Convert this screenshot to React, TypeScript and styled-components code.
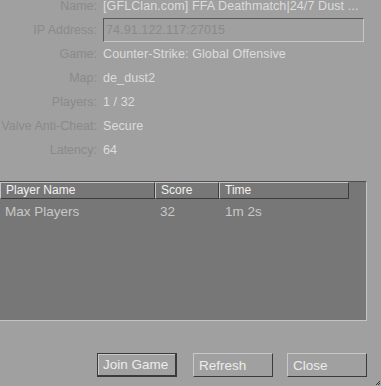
import React from "react";
import styled, { createGlobalStyle } from "styled-components";

const Global = createGlobalStyle`
  html, body { margin: 0; padding: 0; background: #a0a0a0; }
  body { font-family: "Liberation Sans", Arial, sans-serif; font-size: 12.5px; }
`;

const Frame = styled.div`
  width: 381px;
  height: 386px;
  overflow: hidden;
  position: relative;
  background: #a0a0a0;
  display: flex;
  flex-direction: column;
`;

const Info = styled.div`
  display: grid;
  grid-template-columns: 110px 262px;
  column-gap: 6px;
  margin-left: -13px;
  margin-top: -6px;
`;

const Label = styled.div`
  height: 24px;
  line-height: 24px;
  text-align: right;
  color: #8a8a8a;
  white-space: nowrap;
`;

const Value = styled.div`
  height: 24px;
  line-height: 24px;
  color: #dcdcdc;
  white-space: nowrap;
  overflow: hidden;
  letter-spacing: 0.1px;
`;

const Field = styled.div`
  box-sizing: border-box;
  height: 24px;
  width: 261px;
  border-top: 1px solid #585858;
  border-left: 1px solid #585858;
  border-bottom: 1px solid #c8c8c8;
  border-right: 1px solid #c8c8c8;
  line-height: 22px;
  padding-left: 2px;
  color: #8a8a8a;
`;

const List = styled.div`
  box-sizing: border-box;
  margin-top: 19px;
  margin-left: -2px;
  width: 369px;
  height: 140px;
  background: #777777;
  border-top: 1px solid #4e4e4e;
  border-right: 1px solid #c4c4c4;
  border-bottom: 1px solid #c4c4c4;
  display: flex;
  flex-direction: column;
`;

const HeaderRow = styled.div`
  display: flex;
  padding-left: 2px;
`;

const HeaderCell = styled.div<{ $w: number }>`
  box-sizing: border-box;
  width: ${(p) => p.$w}px;
  height: 17px;
  line-height: 15px;
  padding-left: 5px;
  font-size: 12px;
  border-top: 1px solid #c4c4c4;
  border-left: 1px solid #c4c4c4;
  border-bottom: 1px solid #3c3c3c;
  border-right: 1px solid #3c3c3c;
  color: #f2f2f2;
`;

const Row = styled.div`
  display: flex;
  padding-left: 2px;
  height: 26px;
  line-height: 26px;
  color: #c8c8c8;
  font-size: 13.5px;
`;

const Cell = styled.div<{ $w: number }>`
  width: ${(p) => p.$w}px;
  padding-left: 5px;
  box-sizing: border-box;
`;

const Buttons = styled.div`
  display: flex;
  margin-top: 32px;
  padding-left: 97px;
`;

const Button = styled.button<{ $default?: boolean; $gap: number }>`
  box-sizing: border-box;
  width: 80px;
  height: 24px;
  margin: 0 0 0 ${(p) => p.$gap}px;
  padding: 0 0 0 5px;
  text-align: left;
  font-family: inherit;
  font-size: 13.5px;
  color: #ececec;
  background: #a0a0a0;
  border-top: 1px solid ${(p) => (p.$default ? "#3a3a3a" : "#c8c8c8")};
  border-left: 1px solid ${(p) => (p.$default ? "#3a3a3a" : "#c8c8c8")};
  border-bottom: ${(p) => (p.$default ? "2px" : "1px")} solid #3a3a3a;
  border-right: ${(p) => (p.$default ? "2px" : "1px")} solid #3a3a3a;
  box-shadow: ${(p) => (p.$default ? "inset 1px 1px 0 #c8c8c8" : "none")};
`;

const Grip = styled.svg`
  position: absolute;
  right: 0;
  bottom: 0;
`;

export default function App() {
  const rows: [string, React.ReactNode][] = [
    ["Name:", <Value key="n">[GFLClan.com] FFA Deathmatch|24/7 Dust ...</Value>],
    ["IP Address:", <Value key="i"><Field>74.91.122.117:27015</Field></Value>],
    ["Game:", <Value key="g">Counter-Strike: Global Offensive</Value>],
    ["Map:", <Value key="m">de_dust2</Value>],
    ["Players:", <Value key="p">1 / 32</Value>],
    ["Valve Anti-Cheat:", <Value key="v">Secure</Value>],
    ["Latency:", <Value key="l">64</Value>],
  ];
  return (
    <>
      <Global />
      <Frame>
        <Info>
          {rows.map(([l, v]) => (
            <React.Fragment key={l}>
              <Label>{l}</Label>
              {v}
            </React.Fragment>
          ))}
        </Info>
        <List>
          <HeaderRow>
            <HeaderCell $w={155}>Player Name</HeaderCell>
            <HeaderCell $w={64}>Score</HeaderCell>
            <HeaderCell $w={130}>Time</HeaderCell>
          </HeaderRow>
          <Row>
            <Cell $w={155}>Max Players</Cell>
            <Cell $w={65}>32</Cell>
            <Cell $w={130}>1m 2s</Cell>
          </Row>
        </List>
        <Buttons>
          <Button $default $gap={0}>Join Game</Button>
          <Button $gap={16}>Refresh</Button>
          <Button $gap={14}>Close</Button>
        </Buttons>
        <Grip width="6" height="6" viewBox="0 0 6 6">
          <path d="M5 1 L1 5 M5 3 L3 5" stroke="#3a3a3a" strokeWidth="1" />
        </Grip>
      </Frame>
    </>
  );
}
